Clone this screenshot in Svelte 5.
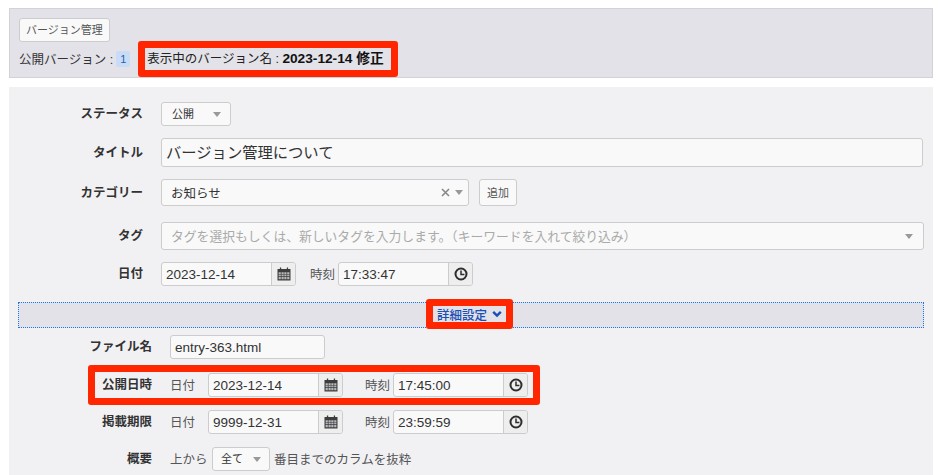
<script>
  const dateRows = [
    { label: '公開日時', date: '2023-12-14', time: '17:45:00', marked: true },
    { label: '掲載期限', date: '9999-12-31', time: '23:59:59', marked: false }
  ];
</script>

{#snippet calendar()}
  <svg width="14" height="14" viewBox="0 0 14 14" aria-hidden="true">
    <path fill="#3d3d3d" d="M.5 2h2.4V.6h1.3V2h5.6V.6h1.3V2h2.4v11.5H.5z" />
    <path fill="#b9b9bd" d="M1.6 5.2h2.2v1.7H1.6zm2.9 0h2.2v1.7H4.5zm2.8 0h2.2v1.7H7.3zm2.9 0h2.2v1.7h-2.2zM1.6 7.6h2.2v1.7H1.6zm2.9 0h2.2v1.7H4.5zm2.8 0h2.2v1.7H7.3zm2.9 0h2.2v1.7h-2.2zM1.6 10h2.2v2.2H1.6zm2.9 0h2.2v2.2H4.5zm2.8 0h2.2v2.2H7.3zm2.9 0h2.2v2.2h-2.2z" />
  </svg>
{/snippet}

{#snippet clock()}
  <svg width="14" height="14" viewBox="0 0 14 14" aria-hidden="true">
    <circle cx="7" cy="7" r="5.5" fill="none" stroke="#2e2e2e" stroke-width="2" />
    <path fill="none" stroke="#2e2e2e" stroke-width="1.5" d="M7 3.4V7.5H10.4" />
  </svg>
{/snippet}

{#snippet caret()}
  <span class="caret"></span>
{/snippet}

{#snippet dateField(value)}
  <div class="addon-group date">
    <span class="addon-input">{value}</span>
    <span class="addon">{@render calendar()}</span>
  </div>
{/snippet}

{#snippet timeField(value)}
  <div class="addon-group time">
    <span class="addon-input">{value}</span>
    <span class="addon">{@render clock()}</span>
  </div>
{/snippet}

<div class="page">
  <section class="version-bar">
    <button class="btn">バージョン管理</button>
    <div class="version-line">
      <span>公開バージョン :</span>
      <span class="badge">1</span>
      <span class="current mark">表示中のバージョン名 : <strong>2023-12-14 修正</strong></span>
    </div>
  </section>

  <section class="panel">
    <div class="row status-row">
      <div class="label">ステータス</div>
      <div class="select status"><span class="cjk">公開</span> {@render caret()}</div>
    </div>
    <div class="row title-row">
      <div class="label">タイトル</div>
      <div class="input title"><span class="cjk">バージョン管理について</span></div>
    </div>
    <div class="row category-row">
      <div class="label">カテゴリー</div>
      <div class="select category">
        <span class="grow">お知らせ</span>
        <svg class="clear" width="9" height="9" viewBox="0 0 9 9" aria-hidden="true">
          <path fill="none" stroke="#888" stroke-width="1.6" d="M1 1l7 7M8 1 1 8" />
        </svg>
        {@render caret()}
      </div>
      <button class="btn add">追加</button>
    </div>
    <div class="row tag-row">
      <div class="label">タグ</div>
      <div class="select tag">
        <span class="grow placeholder cjk">タグを選択もしくは、新しいタグを入力します。（キーワードを入れて絞り込み）</span>
        {@render caret()}
      </div>
    </div>
    <div class="row date-row">
      <div class="label">日付</div>
      {@render dateField('2023-12-14')}
      <span class="field-label first-time">時刻</span>
      {@render timeField('17:33:47')}
    </div>

    <div class="detail-bar">
      <span class="detail mark">詳細設定
        <svg width="10" height="8" viewBox="0 0 10 8" aria-hidden="true">
          <path fill="none" stroke="#1a4fb4" stroke-width="2.4" d="M1.2 1.8 5 5.6l3.8-3.8" />
        </svg>
      </span>
    </div>

    <div class="row file-row sub">
      <div class="label">ファイル名</div>
      <div class="input file">entry-363.html</div>
    </div>

    {#each dateRows as row}
      <div class="row sub period" class:marked={row.marked}>
        <div class="label">{row.label}</div>
        <span class="field-label lead">日付</span>
        {@render dateField(row.date)}
        <span class="field-label second">時刻</span>
        {@render timeField(row.time)}
      </div>
    {/each}

    <div class="row sub summary">
      <div class="label">概要</div>
      <span class="field-label lead wide">上から</span>
      <div class="select all"><span class="cjk">全て</span> {@render caret()}</div>
      <span class="field-label after">番目までのカラムを抜粋</span>
    </div>
  </section>
</div>

<style>
  :global(body) {
    background: #fff;
  }

  .page {
    width: 940px;
    height: 475px;
    overflow: hidden;
    box-sizing: border-box;
    padding: 8px 7px 0 9px;
    font-family: 'Liberation Sans', 'Noto Sans CJK JP', sans-serif;
    font-size: 12.5px;
    color: #333;
  }

  .version-bar {
    height: 70px;
    box-sizing: border-box;
    background: #e2e2e8;
    border: 1px solid #d2d2d8;
    padding: 9px 9px 0;
  }

  .btn {
    box-sizing: border-box;
    height: 24px;
    padding: 0 6px 2px;
    background: #f9f9f9;
    border: 1px solid #ccc;
    border-radius: 3px;
    font: inherit;
    font-size: 11px;
    color: #555;
  }

  .version-line {
    display: flex;
    align-items: center;
    margin-top: 6px;
    height: 21px;
  }

  .badge {
    margin-left: 3px;
    width: 14px;
    height: 16px;
    text-align: center;
    line-height: 16px;
    background: #c9dcf7;
    border-radius: 2px;
    font-size: 11px;
    color: #2a5fa8;
  }

  .mark {
    border: 7px solid #ff2600;
    border-radius: 3px;
  }

  .current {
    margin-left: 8px;
    padding: 3px 7px 3px 2px;
    line-height: 15px;
    color: #222;
    white-space: nowrap;
  }

  .current strong {
    font-size: 13.7px;
    color: #111;
  }

  .panel {
    margin-top: 9px;
    height: 388px;
    box-sizing: border-box;
    background: #f1f1f4;
    padding-top: 15px;
  }

  .row {
    display: flex;
    align-items: center;
  }

  /* CJK glyphs sit low in the line box here, nudge them up */
  .cjk {
    padding-bottom: 2px;
  }

  .label {
    flex: none;
    width: 134px;
    margin-right: 18px;
    padding-bottom: 3px;
    text-align: right;
    font-weight: 700;
    color: #333;
  }

  .input,
  .select,
  .addon-group {
    box-sizing: border-box;
    background: #f9f9f9;
    border: 1px solid #ccc;
    border-radius: 3px;
    color: #333;
  }

  .input {
    display: flex;
    align-items: center;
  }

  .select {
    display: flex;
    align-items: center;
  }

  .caret {
    flex: none;
    width: 0;
    height: 0;
    border-left: 4px solid transparent;
    border-right: 4px solid transparent;
    border-top: 5px solid #999;
  }

  .grow {
    flex: 1;
  }

  .status {
    width: 70px;
    height: 24px;
    padding: 0 9px 0 10px;
    justify-content: space-between;
    font-size: 11px;
  }

  .title-row {
    margin-top: 12px;
  }

  .title {
    width: 762px;
    height: 29px;
    padding: 0 4px;
    font-size: 15.3px;
  }

  .title .cjk {
    padding-bottom: 4px;
  }

  .category-row {
    margin-top: 12px;
  }

  .category {
    width: 308px;
    height: 27px;
    padding: 0 5px 0 9px;
  }

  .clear {
    margin-right: 5px;
  }

  .add {
    margin-left: 10px;
    height: 27px;
    padding: 0 7px 2px;
  }

  .tag-row {
    margin-top: 16px;
  }

  .tag {
    width: 763px;
    height: 28px;
    padding: 0 10px 0 9px;
  }

  .placeholder {
    font-size: 12.8px;
    color: #aaa;
  }

  .date-row {
    margin-top: 12px;
  }

  .addon-group {
    display: flex;
    height: 24px;
  }

  .addon-input {
    flex: 1;
    display: flex;
    align-items: center;
    padding: 0 4px;
    font-size: 13.5px;
  }

  .addon {
    flex: none;
    width: 23px;
    display: flex;
    align-items: center;
    justify-content: center;
    background: #eee;
    border-left: 1px solid #ccc;
    border-radius: 0 3px 3px 0;
  }

  .date {
    width: 135px;
  }

  .time {
    width: 135px;
  }

  .field-label {
    padding-bottom: 2px;
    color: #555;
    white-space: nowrap;
  }

  .first-time {
    margin: 0 3px 0 14px;
  }

  .detail-bar {
    display: flex;
    justify-content: center;
    margin: 16px 9px 0 9px;
    height: 26px;
    box-sizing: border-box;
    background: #e2e2e8;
    border: 1px dotted #1a7ae0;
  }

  .detail {
    display: flex;
    align-items: center;
    gap: 5px;
    flex: none;
    height: 30px;
    box-sizing: border-box;
    margin-top: -4px;
    margin-right: 3px;
    padding: 0 4px;
    color: #1a4fb4;
    font-weight: 500;
  }

  .sub .label {
    width: 143px;
  }

  .lead {
    width: 38px;
  }

  .lead.wide {
    width: 42px;
  }

  .file-row {
    margin-top: 7px;
  }

  .file {
    width: 155px;
    height: 24px;
    padding: 0 4px;
    font-size: 13.5px;
  }

  .period {
    position: relative;
    margin-top: 13px;
  }

  .file-row + .period {
    margin-top: 14px;
  }

  .period.marked::after {
    content: '';
    position: absolute;
    left: 79px;
    top: -8px;
    width: 452px;
    height: 40px;
    box-sizing: border-box;
    border: 7px solid #ff2600;
    border-radius: 3px;
  }

  .second {
    margin: 0 3px 0 22px;
  }

  .summary {
    margin-top: 13px;
  }

  .all {
    width: 58px;
    height: 24px;
    padding: 0 8px;
    justify-content: space-between;
    font-size: 11px;
  }

  .after {
    margin-left: 4px;
  }
</style>
